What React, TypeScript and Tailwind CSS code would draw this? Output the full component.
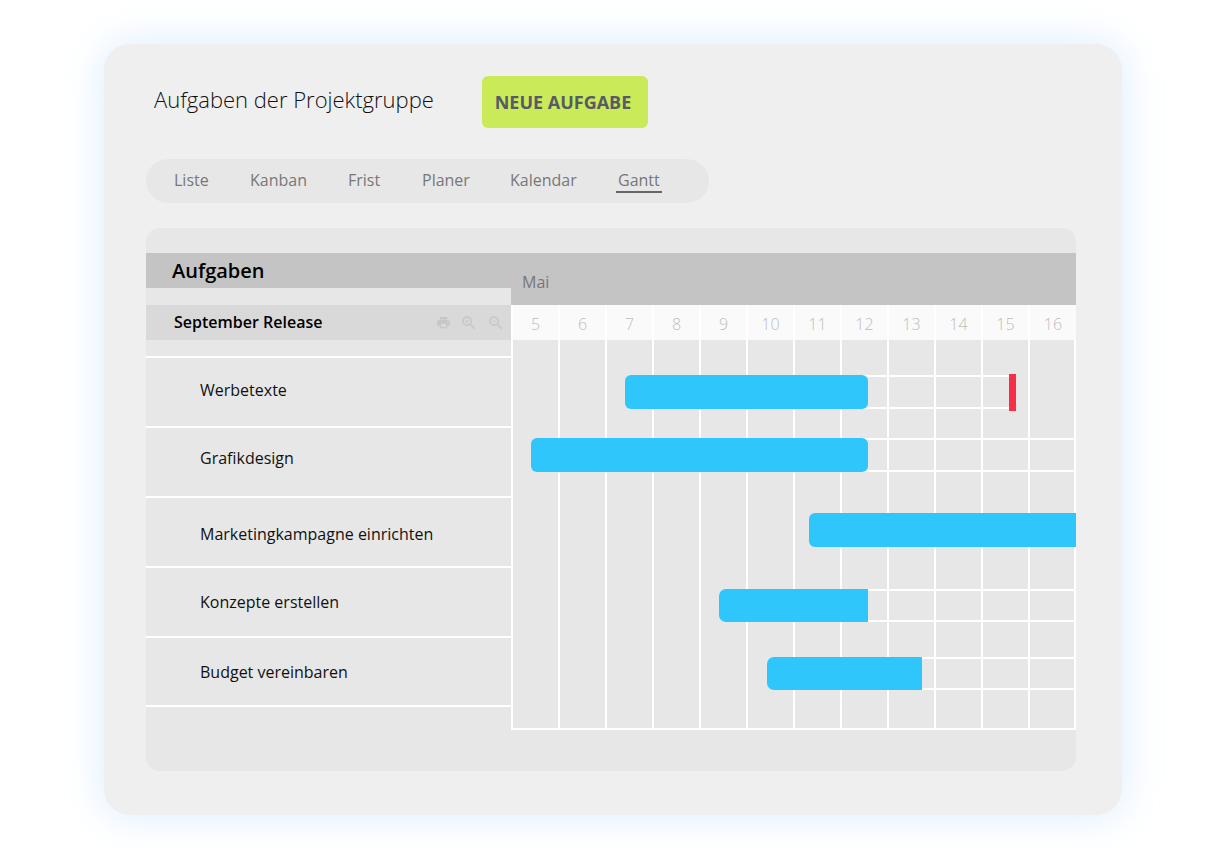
import React from "react";
import { MdPrint, MdZoomIn, MdZoomOut } from "react-icons/md";

const days = [5, 6, 7, 8, 9, 10, 11, 12, 13, 14, 15, 16];
const tasks: [string, string][] = [
  ["Werbetexte", "h-[70px] pt-[21px]"],
  ["Grafikdesign", "h-[70px] pt-[19px]"],
  ["Marketingkampagne einrichten", "h-[70px] pt-[25px]"],
  ["Konzepte erstellen", "h-[70px] pt-[23px]"],
  ["Budget vereinbaren", "h-[69px] pt-[23px]"],
];

export default function App() {
  return (
    <div className="w-[1224px] h-[860px] bg-white pt-[44px] pl-[104px] overflow-hidden font-['Open_Sans',sans-serif]">
      <div className="w-[1018px] h-[771px] bg-[#efefef] rounded-[26px] shadow-[0_0_40px_rgba(120,185,255,0.28)] pl-[42px] pt-[32px]">
        <div className="flex items-start h-[52px]">
          <h1 className="ml-[8px] -mt-[1px] w-[328px] text-[22px] leading-[48px] font-light text-[#111111]">Aufgaben der Projektgruppe</h1>
          <button className="w-[166px] h-[52px] pr-[4px] rounded-[6px] bg-[#cbea58] text-[18px] font-bold text-[#565b66] text-center">NEUE AUFGABE</button>
        </div>

        <nav className="mt-[31px] w-[563px] h-[44px] rounded-[22px] bg-[#e7e7e7] flex items-center pl-[28px] pb-[2px] text-[16px] text-[#777777]">
          <span className="w-[76px]">Liste</span>
          <span className="w-[98px]">Kanban</span>
          <span className="w-[74px]">Frist</span>
          <span className="w-[88px]">Planer</span>
          <span className="w-[108px]">Kalendar</span>
          <span className="relative">
            Gantt
            <span className="absolute -left-[2px] -right-[2px] top-[23px] h-[2px] bg-[#666666]" />
          </span>
        </nav>

        <section className="mt-[25px] w-[930px] h-[543px] rounded-[14px] bg-[#e7e7e7] pt-[25px] overflow-hidden flex">
          <div className="w-[365px] shrink-0">
            <div className="h-[35px] w-[366px] bg-[#c4c4c4] pl-[26px] text-[20px] font-semibold leading-[36px] text-black">Aufgaben</div>
            <div className="h-[17px]" />
            <div className="h-[35px] bg-[#d9d9d9] flex items-center pl-[28px] pr-[6px] text-[16px] font-semibold text-black">
              <span className="flex-1 -mt-[2px]">September Release</span>
              <span className="flex items-center gap-[9px] text-[#c6c6c6]">
                <MdPrint size={15} />
                <MdZoomIn size={18} />
                <MdZoomOut size={18} />
              </span>
            </div>
            <div className="h-[18px] border-b-2 border-white" />
            {tasks.map(([name, cls]) => (
              <div key={name} className={`${cls} border-b-2 border-white pl-[54px] text-[16px] leading-[22px] text-[#111111]`}>
                {name}
              </div>
            ))}
          </div>

          <div className="w-[565px] shrink-0">
            <div className="h-[52px] bg-[#c4c4c4] pl-[11px] pt-[17px] text-[16px] leading-[24px] text-[#777777]">Mai</div>
            <div className="grid grid-cols-[repeat(11,47px)_48px] h-[35px] bg-[#fafafa]">
              {days.map((d) => (
                <div key={d} className="border-l-2 border-white text-center text-[16px] font-light leading-[38px] text-[#bdbdbd]">{d}</div>
              ))}
            </div>
            <div className="relative h-[390px] border-b-2 border-white">
              <div className="grid grid-cols-[repeat(11,47px)_48px] h-full">
                {days.map((d) => (
                  <div key={d} className="border-l-2 border-white last:border-r-2" />
                ))}
              </div>
              <div className="absolute left-[124px] top-[35px] w-[374px] h-[34px] border-y-2 border-white" />
              <div className="absolute left-[498px] top-[34px] w-[7px] h-[37px] bg-[#f62e46]" />
              <div className="absolute left-[114px] top-[35px] w-[243px] h-[34px] rounded-[6px] bg-[#2fc6fb]" />

              <div className="absolute left-[30px] right-0 top-[98px] h-[34px] border-y-2 border-r-2 border-white" />
              <div className="absolute left-[20px] top-[98px] w-[337px] h-[34px] rounded-[6px] bg-[#2fc6fb]" />

              <div className="absolute left-[298px] right-0 top-[173px] h-[34px] rounded-l-[6px] bg-[#2fc6fb]" />

              <div className="absolute left-[218px] right-0 top-[249px] h-[33px] border-y-2 border-r-2 border-white" />
              <div className="absolute left-[208px] top-[249px] w-[149px] h-[33px] rounded-l-[7px] bg-[#2fc6fb]" />

              <div className="absolute left-[266px] right-0 top-[317px] h-[33px] border-y-2 border-r-2 border-white" />
              <div className="absolute left-[256px] top-[317px] w-[155px] h-[33px] rounded-l-[7px] bg-[#2fc6fb]" />
            </div>
          </div>
        </section>
      </div>
    </div>
  );
}
